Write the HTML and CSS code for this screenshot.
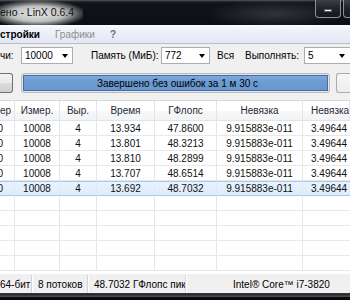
FILE: index.html
```html
<!DOCTYPE html>
<html>
<head>
<meta charset="utf-8">
<link rel="stylesheet" href="styles.css">
</head>
<body>
<div class="window">
  <div class="titlebar">
    <span class="title">ено - LinX 0.6.4</span>
    <div class="caption">
      <div class="cbtn cbtn-min"><span class="dash"></span></div>
      <div class="cbtn cbtn-max"></div>
    </div>
  </div>
  <div class="menubar">
    <span class="menu menu-bold">стройки</span>
    <span class="menu menu-off">Графики</span>
    <span class="menu menu-q">?</span>
  </div>
  <div class="client">
    <div class="toolbar">
      <span class="lbl lbl1">чи:</span>
      <div class="combo combo1"><span>10000</span><i class="arrow"></i></div>
      <span class="lbl lbl2">Память (МиБ):</span>
      <div class="combo combo2"><span>772</span><i class="arrow"></i></div>
      <span class="lbl lbl3">Вся</span>
      <span class="lbl lbl4">Выполнять:</span>
      <div class="combo combo3"><span>5</span><i class="arrow"></i></div>
    </div>
    <div class="actions">
      <div class="button btn-left"></div>
      <div class="progress"><div class="fill">Завершено без ошибок за 1 м 30 с</div></div>
      <div class="button btn-right"></div>
    </div>
    <div class="table">
      <div class="row head">
        <div class="c c0">ер</div><div class="c">Измер.</div><div class="c">Выр.</div><div class="c">Время</div><div class="c">ГФлопс</div><div class="c">Невязка</div><div class="c c6">Невязка</div>
      </div>
      <div class="row"><div class="c c0">0</div><div class="c">10008</div><div class="c">4</div><div class="c">13.934</div><div class="c">47.8600</div><div class="c">9.915883e-011</div><div class="c c6">3.49644</div></div>
      <div class="row"><div class="c c0">0</div><div class="c">10008</div><div class="c">4</div><div class="c">13.801</div><div class="c">48.3213</div><div class="c">9.915883e-011</div><div class="c c6">3.49644</div></div>
      <div class="row"><div class="c c0">0</div><div class="c">10008</div><div class="c">4</div><div class="c">13.810</div><div class="c">48.2899</div><div class="c">9.915883e-011</div><div class="c c6">3.49644</div></div>
      <div class="row"><div class="c c0">0</div><div class="c">10008</div><div class="c">4</div><div class="c">13.707</div><div class="c">48.6514</div><div class="c">9.915883e-011</div><div class="c c6">3.49644</div></div>
      <div class="row sel"><div class="c c0">0</div><div class="c">10008</div><div class="c">4</div><div class="c">13.692</div><div class="c">48.7032</div><div class="c">9.915883e-011</div><div class="c c6">3.49644</div></div>
      <div class="row empty"><div class="c c0"></div><div class="c"></div><div class="c"></div><div class="c"></div><div class="c"></div><div class="c"></div><div class="c c6"></div></div>
      <div class="row empty"><div class="c c0"></div><div class="c"></div><div class="c"></div><div class="c"></div><div class="c"></div><div class="c"></div><div class="c c6"></div></div>
      <div class="row empty"><div class="c c0"></div><div class="c"></div><div class="c"></div><div class="c"></div><div class="c"></div><div class="c"></div><div class="c c6"></div></div>
      <div class="row empty"><div class="c c0"></div><div class="c"></div><div class="c"></div><div class="c"></div><div class="c"></div><div class="c"></div><div class="c c6"></div></div>
      <div class="row empty"><div class="c c0"></div><div class="c"></div><div class="c"></div><div class="c"></div><div class="c"></div><div class="c"></div><div class="c c6"></div></div>
    </div>
  </div>
  <div class="statusbar">
    <div class="seg seg1">64-бит</div>
    <div class="seg seg2">8 потоков</div>
    <div class="seg seg3">48.7032 ГФлопс пик</div>
    <div class="seg seg4">Intel® Core™ i7-3820</div>
  </div>
  <div class="frame-bottom"></div>
</div>
</body>
</html>
```

FILE: styles.css
```css
* { box-sizing: border-box; }
html, body {
  margin: 0;
  padding: 0;
}
body {
  width: 350px;
  height: 300px;
  overflow: hidden;
  background: #f0f0f0;
  font-family: "Liberation Sans", Arial, sans-serif;
  font-size: 10px;
  color: #000;
}
.window {
  display: flex;
  flex-direction: column;
  width: 350px;
  height: 300px;
  overflow: hidden;
}

/* title bar */
.titlebar {
  height: 25px;
  flex: none;
  display: flex;
  justify-content: space-between;
  align-items: flex-start;
  background:
    radial-gradient(ellipse 70px 14px at 275px 14px, rgba(90,95,100,0.45), rgba(90,95,100,0) 100%),
    linear-gradient(180deg, #62676c 0, #2a2e33 1px, #101419 3px, #0b0f13 100%);
  overflow: hidden;
}
.title {
  height: 25px;
  line-height: 25px;
  padding: 0 9px 0 0;
  font-size: 10.5px;
  color: #111;
  background: radial-gradient(ellipse 60% 56% at 45% 55%, rgba(232,232,232,1) 0, rgba(210,210,210,0.9) 55%, rgba(140,140,140,0) 100%);
}
.caption {
  display: flex;
  gap: 2px;
  width: 35px;
  overflow: hidden;
  flex: none;
}
.cbtn {
  width: 26px;
  height: 18px;
  flex: none;
  border: 1px solid #8d9298;
  border-top: none;
  border-radius: 0 0 4px 4px;
  background: linear-gradient(180deg, #3d4146 0, #202428 50%, #15181c 100%);
  display: flex;
  align-items: center;
  justify-content: center;
}
.dash {
  width: 8px;
  height: 3px;
  margin-top: 4px;
  background: #f2f2f2;
  border: 1px solid #5b5f64;
}

/* menu */
.menubar {
  height: 19px;
  flex: none;
  display: flex;
  align-items: center;
  background: linear-gradient(180deg, #fbfcfe 0, #eef1f9 30%, #e3e8f4 100%);
  border-bottom: 1px solid #b6bccd;
}
.menu { font-size: 10px; }
.menu-bold { font-weight: bold; color: #000; width: 55px; }
.menu-off { color: #8e8e8e; width: 55px; }
.menu-q { color: #6e6e6e; font-weight: bold; }

/* client */
.client {
  flex: none;
  height: 230px;
  display: flex;
  flex-direction: column;
  padding-top: 3px;
}
.toolbar {
  height: 17px;
  display: flex;
  align-items: center;
  flex: none;
}
.lbl { white-space: nowrap; color: #000; flex: none; }
.lbl1 { width: 21px; }
.lbl2 { width: 70px; margin-left: 18px; }
.lbl3 { width: 28px; margin-left: 7px; }
.lbl4 { width: 59px; }
.combo {
  height: 17px;
  background: #fff;
  border: 1px solid #abadb3;
  display: flex;
  align-items: center;
  justify-content: space-between;
  padding: 0 4px 0 3px;
  flex: none;
}
.combo1 { width: 52px; }
.combo2 { width: 49px; }
.combo3 { width: 46px; border-right: none; padding-right: 5px; }
.arrow {
  width: 0;
  height: 0;
  border-left: 3.5px solid transparent;
  border-right: 3.5px solid transparent;
  border-top: 4px solid #000;
  margin-top: 1px;
}

.actions {
  height: 20px;
  margin-top: 9px;
  display: flex;
  flex: none;
}
.button {
  height: 20px;
  border: 1px solid #707070;
  border-radius: 3px;
  background: linear-gradient(180deg, #f2f2f2 0, #ebebeb 50%, #dddddd 51%, #cfcfcf 100%);
  flex: none;
}
.btn-left { width: 13px; border-left: none; border-radius: 0 3px 3px 0; }
.btn-right { width: 14px; margin-left: 6px; border-right: none; border-radius: 3px 0 0 3px; border-color: #acacac; background: linear-gradient(180deg, #f6f6f6, #ededed); }
.progress {
  width: 309px;
  margin-left: 8px;
  height: 20px;
  border: 1px solid #bcbcbc;
  border-radius: 3px;
  background: #e6e6e6;
  padding: 1px;
  flex: none;
}
.fill {
  height: 100%;
  background: linear-gradient(180deg, #7ea9da 0, #6d9bd2 40%, #6897cf 100%);
  border: 1px solid #3d6ea8;
  display: flex;
  align-items: center;
  justify-content: center;
  color: #000;
  white-space: nowrap;
  padding-left: 4px;
}

/* table */
.table {
  margin-top: 7px;
  height: 174px;
  background: #fff;
  border-top: 1px solid #d9d9d9;
  overflow: hidden;
  flex: none;
}
.row {
  display: grid;
  grid-template-columns: 15px 45px 37px 58px 62px 86px 47px;
  height: 15px;
  overflow: hidden;
}
.row.head {
  height: 20px;
  background: linear-gradient(180deg, #ffffff 0, #ffffff 50%, #f7f8fa 51%, #f2f3f5 100%);
  border-bottom: 1px solid #e2e3e5;
}
.c {
  display: flex;
  align-items: center;
  justify-content: center;
  white-space: nowrap;
  overflow: hidden;
  border-right: 1px solid #e6e6e6;
  border-bottom: 1px solid #e8e8e8;
  color: #111;
}
.head .c {
  border-bottom: none;
  border-right: 1px solid #e5e5e5;
  color: #1e2a38;
}
.c0 { justify-content: flex-end; padding-right: 11px; }
.head .c0 { padding-right: 3px; }
.c6 { justify-content: flex-start; padding-left: 8px; border-right: none; }
.row.sel {
  background: linear-gradient(180deg, #eaf3fd 0, #dcebfc 100%);
}
.row.sel .c {
  border-top: 1px solid #a9c8ee;
  border-bottom: 1px solid #a9c8ee;
  border-right-color: #dcebfc;
}

/* status bar */
.statusbar {
  height: 18px;
  flex: none;
  display: flex;
  align-items: stretch;
  background: #f0f0f0;
  margin-top: 1px;
}
.seg {
  display: flex;
  align-items: center;
  white-space: nowrap;
  border-right: 1px solid #d5d5d5;
  box-shadow: 1px 0 0 #ffffff;
  overflow: hidden;
  flex: none;
}
.seg1 { width: 32px; }
.seg2 { width: 55px; padding-left: 5px; margin-left: 1px; }
.seg3 { width: 97px; padding-left: 5px; margin-left: 1px; }
.seg4 { width: 164px; padding-left: 46px; margin-left: 1px; border-right: none; box-shadow: none; }

.frame-bottom {
  flex: 1;
  background: linear-gradient(180deg, #3a3d41 0, #1d2024 30%, #6a6d71 45%, #0a0c0e 60%, #050607 100%);
}
```
